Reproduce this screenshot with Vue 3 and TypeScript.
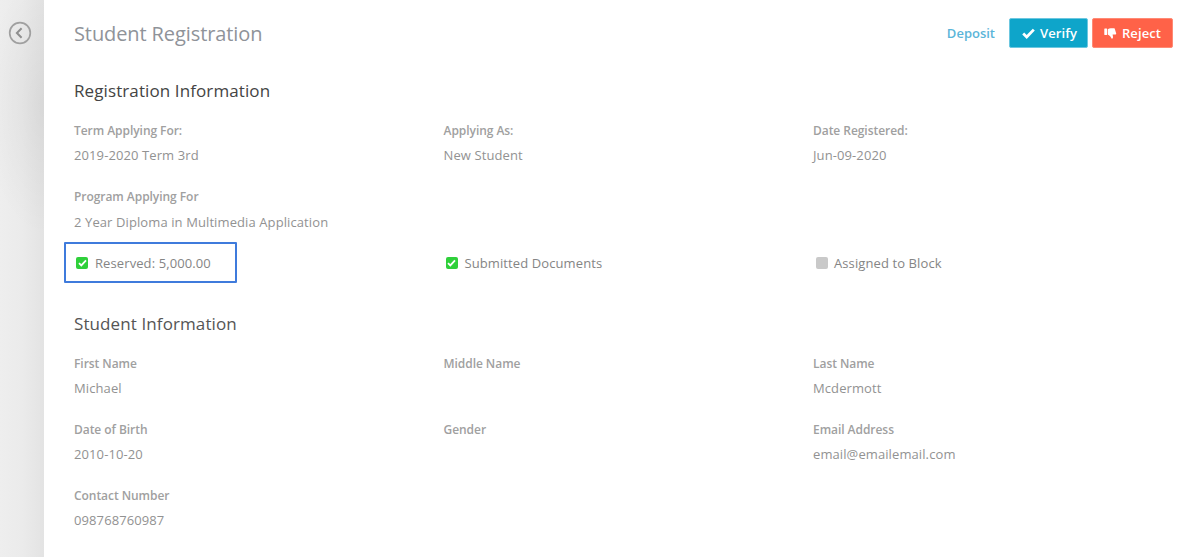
<template>
  <div class="page">
    <aside class="side">
      <button class="back" aria-label="Back">
        <svg width="24" height="24" viewBox="0 0 24 24" fill="none" stroke="#a0a0a0">
          <circle cx="12" cy="12" r="10.3" stroke-width="1.7" />
          <path d="M13.6 7.2 8.9 12l4.7 4.8" stroke-width="2" stroke="#8f8f8f" />
        </svg>
      </button>
    </aside>

    <main class="main">
      <header class="top">
        <h1 class="title">Student Registration</h1>
        <div class="actions">
          <a class="deposit">Deposit</a>
          <button class="btn verify">
            <svg width="13" height="11" viewBox="0 0 13 11" fill="none" stroke="#fff" stroke-width="2.8">
              <path d="M1.2 5.6 4.7 9 11.8 1.6" />
            </svg>
            Verify
          </button>
          <button class="btn reject">
            <svg width="13" height="13" viewBox="0 0 13 13" fill="#fff">
              <rect x="0.3" y="1.5" width="2.8" height="6.5" rx="0.4" />
              <path d="M3.8 2.2c1-.6 2-.9 3-.9h3c.7 0 1 .4 1.1.9l1.3 4.2c.1.7-.3 1.2-1 1.2H8.6l.4 2.2c.1.9-.3 1.8-1 1.9-.4 0-.6-.2-.7-.6L6 8.9 3.8 7.4z" />
            </svg>
            Reject
          </button>
        </div>
      </header>

      <h2 class="section first">Registration Information</h2>
      <div class="grid reg">
        <div v-for="f in regFields" :key="f.label" class="field">
          <div class="label">{{ f.label }}</div>
          <div class="value">{{ f.value }}</div>
        </div>
      </div>
      <div class="field program">
        <div class="label">Program Applying For</div>
        <div class="value">2 Year Diploma in Multimedia Application</div>
      </div>

      <div class="grid checks">
        <div v-for="c in checks" :key="c.text" class="check" :class="{ marked: c.marked }">
          <span class="box" :class="{ on: c.on }">
            <svg v-if="c.on" width="9" height="8" viewBox="0 0 9 8" fill="none" stroke="#fff" stroke-width="1.8">
              <path d="M1 4.2 3.3 6.4 8 1.4" />
            </svg>
          </span>
          <span>{{ c.text }}</span>
        </div>
      </div>

      <h2 class="section second">Student Information</h2>
      <div class="grid student">
        <div v-for="f in studentFields" :key="f.label" class="field">
          <div class="label">{{ f.label }}</div>
          <div class="value">{{ f.value || '&nbsp;' }}</div>
        </div>
      </div>
    </main>
  </div>
</template>

<script setup lang="ts">
interface Field {
  label: string;
  value: string;
}

const regFields: Field[] = [
  { label: 'Term Applying For:', value: '2019-2020 Term 3rd' },
  { label: 'Applying As:', value: 'New Student' },
  { label: 'Date Registered:', value: 'Jun-09-2020' },
];

const checks = [
  { text: 'Reserved: 5,000.00', on: true, marked: true },
  { text: 'Submitted Documents', on: true, marked: false },
  { text: 'Assigned to Block', on: false, marked: false },
];

const studentFields: Field[] = [
  { label: 'First Name', value: 'Michael' },
  { label: 'Middle Name', value: '' },
  { label: 'Last Name', value: 'Mcdermott' },
  { label: 'Date of Birth', value: '2010-10-20' },
  { label: 'Gender', value: '' },
  { label: 'Email Address', value: 'email@emailemail.com' },
  { label: 'Contact Number', value: '098768760987' },
];
</script>

<style>
html, body { background: #fff; overflow: hidden; }
</style>

<style scoped>
.page { display: flex; height: 557px; font-family: "Open Sans", sans-serif; color: #8a8a8a; }

.side {
  width: 44px; flex: none; padding: 21px 0 0 8px; box-sizing: border-box;
  background:
    radial-gradient(60px 130px at 44px 105px, rgba(0, 0, 0, 0.05), rgba(0, 0, 0, 0) 100%),
    linear-gradient(90deg, #eeeeee 0%, #ebebeb 50%, #e3e3e3 100%);
}
.back { display: block; width: 24px; height: 24px; padding: 0; border: 0; background: none; }

.main { flex: 1; padding: 18px 30px 0; min-width: 0; }

.top { display: flex; justify-content: space-between; align-items: center; height: 30px; }
.title { margin: 0; font-size: 20px; font-weight: 400; letter-spacing: -0.1px; color: #8f9399; }
.actions { display: flex; align-items: center; gap: 4px; }
.deposit { font-size: 13px; font-weight: 600; color: #5bb5d9; margin-right: 10px; }
.btn {
  display: flex; align-items: center; justify-content: center; gap: 5px;
  height: 30px; padding: 0; border: 1px solid #6cc7e0; border-radius: 2px;
  font: 600 13px "Open Sans", sans-serif; letter-spacing: 0.1px; color: #fff;
}
.verify { width: 79px; padding-left: 2px; background: #0ea5ca; }
.reject { width: 81px; background: #ff6248; border-color: #ff8a75; }

.section { margin: 0; font-size: 17px; font-weight: 400; letter-spacing: 0.1px; line-height: 26px; }
.first { margin-top: 30px; color: #444; }
.second { margin-top: 39px; color: #555; }

.grid { display: grid; grid-template-columns: 369.5px 369.5px 1fr; }
.field { font-size: 13px; }
.label { font-size: 12px; font-weight: 600; letter-spacing: -0.05px; color: #a0a0a0; line-height: 18px; }
.value { line-height: 18px; letter-spacing: 0.1px; color: #929292; }

.reg { margin-top: 18px; }
.reg .value { margin-top: 6px; }
.program { margin-top: 24px; }
.program .value { margin-top: 7px; }

.checks { margin-top: 23px; height: 18px; }
.check { position: relative; display: flex; align-items: center; gap: 7px; font-size: 13px; line-height: 18px; letter-spacing: 0.1px; color: #858585; padding-left: 2px; }
.check:nth-child(3) { gap: 6px; padding-left: 3px; }
.check.marked::after {
  content: ""; position: absolute; left: -10px; top: -12px; width: 173px; height: 41px;
  box-sizing: border-box; border: 2px solid #3f7bdc; border-radius: 1px;
}
.box {
  display: flex; align-items: center; justify-content: center;
  width: 12px; height: 12px; border-radius: 2px; background: #c9c9c9; flex: none;
}
.box.on { background: #2fd03a; }

.student { margin-top: 18px; row-gap: 24px; }
.student .value { margin-top: 6px; }
</style>
